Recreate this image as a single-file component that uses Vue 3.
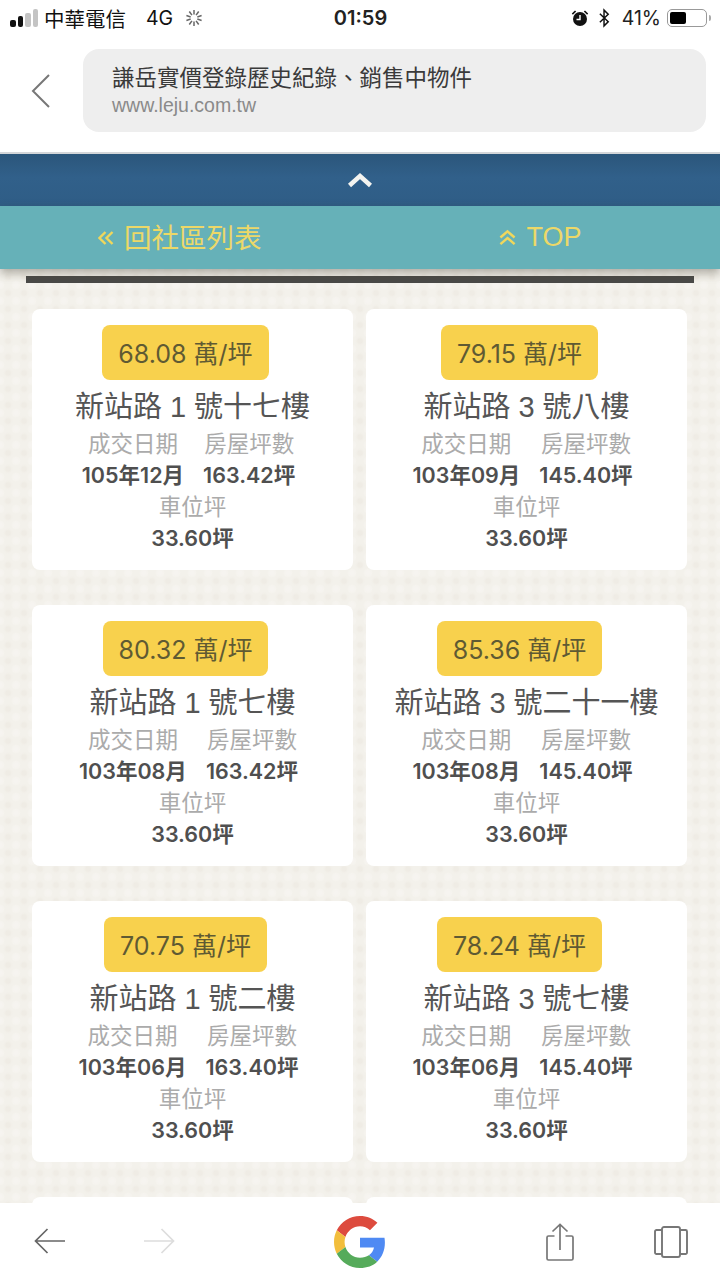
<script setup>
const deals = [
  { price: '68.08', name: '新站路 1 號十七樓', date: '105年12月', size: '163.42坪' },
  { price: '79.15', name: '新站路 3 號八樓', date: '103年09月', size: '145.40坪' },
  { price: '80.32', name: '新站路 1 號七樓', date: '103年08月', size: '163.42坪' },
  { price: '85.36', name: '新站路 3 號二十一樓', date: '103年08月', size: '145.40坪' },
  { price: '70.75', name: '新站路 1 號二樓', date: '103年06月', size: '163.40坪' },
  { price: '78.24', name: '新站路 3 號七樓', date: '103年06月', size: '145.40坪' },
  { price: '78.24', name: '新站路 1 號五樓', date: '103年05月', size: '163.40坪' },
  { price: '78.24', name: '新站路 3 號五樓', date: '103年05月', size: '145.40坪' }
];

// 轉圈圈的線
const spokes = Array.from({ length: 10 }, (_, i) => i * 36);
</script>

<template>
  <div class="page">
    <div class="status-bar">
      <div class="status-left">
        <div class="signal">
          <i class="on b1"></i><i class="on b2"></i><i class="b3"></i><i class="b4"></i>
        </div>
        <span class="carrier">中華電信</span>
        <span class="network">4G</span>
        <svg class="spinner" viewBox="0 0 18 18" width="18" height="18">
          <line
            v-for="deg in spokes"
            :key="deg"
            x1="9" y1="1" x2="9" y2="5.500"
            stroke="#666" stroke-width="1.500"
            :transform="`rotate(${deg} 9 9)`"
          />
        </svg>
      </div>
      <div class="status-time">01:59</div>
      <div class="status-right">
        <svg class="alarm" viewBox="0 0 18 18" width="18" height="18">
          <circle cx="9" cy="10" r="7" fill="#111" />
          <path d="M9 6v4.500H5.500" fill="none" stroke="#fff" stroke-width="1.400" />
          <path d="M0.800 4.600 4 1.400 5.200 2.400 1.900 5.800zM17.200 4.600 14 1.400 12.800 2.400 16.100 5.800z" fill="#111" />
        </svg>
        <svg class="bluetooth" viewBox="0 0 14 20" width="13" height="20">
          <path d="M2 5.500 11 14 6.500 18.500V1.500L11 6 2 14.500" fill="none" stroke="#111" stroke-width="1.600" />
        </svg>
        <span class="percent">41%</span>
        <div class="battery"><div class="battery-fill"></div></div>
        <div class="battery-nub"></div>
      </div>
    </div>

    <div class="browser-head">
      <svg class="head-back" viewBox="0 0 20 36" width="20" height="36">
        <path d="M18 2 2 18l16 16" fill="none" stroke="#777" stroke-width="2" />
      </svg>
      <div class="address">
        <div class="address-title">謙岳實價登錄歷史紀錄、銷售中物件</div>
        <div class="address-url">www.leju.com.tw</div>
      </div>
    </div>

    <div class="collapse-bar">
      <svg viewBox="0 0 26 16" width="26" height="16">
        <path d="M2.500 13.500 13 4l10.500 9.500" fill="none" stroke="#f4f4f0" stroke-width="4.500" />
      </svg>
    </div>

    <div class="nav-bar">
      <div class="nav-item nav-back">
        <svg viewBox="0 0 16 14" width="16" height="14">
          <path d="M7.500 1 1.500 7l6 6M14.500 1l-6 6 6 6" fill="none" stroke="#f0d75c" stroke-width="2.400" />
        </svg>
        <span class="nav-back-text">回社區列表</span>
      </div>
      <div class="nav-item nav-top">
        <svg viewBox="0 0 18 18" width="17" height="18">
          <path d="M1.500 8.500 9 2l7.500 6.500M1.500 15.500 9 9l7.500 6.500" fill="none" stroke="#f0d75c" stroke-width="2.600" />
        </svg>
        <span>TOP</span>
      </div>
    </div>

    <div class="content">
      <div class="rule"></div>
      <div class="deal-grid">
        <div v-for="(deal, i) in deals" :key="i" class="deal-card">
          <div class="price-row">
            <div class="price">{{ deal.price }} 萬/坪</div>
          </div>
          <div class="deal-name">{{ deal.name }}</div>
          <div class="deal-cols">
            <div class="deal-col">
              <div class="label">成交日期</div>
              <div class="value">{{ deal.date }}</div>
            </div>
            <div class="deal-col">
              <div class="label">房屋坪數</div>
              <div class="value">{{ deal.size }}</div>
            </div>
          </div>
          <div class="label">車位坪</div>
          <div class="value">33.60坪</div>
        </div>
      </div>
    </div>

    <div class="toolbar">
      <svg class="tool-back" viewBox="0 0 31 26" width="31" height="26">
        <path d="M13.500 1 1.500 13l12 12M1.500 13H31" fill="none" stroke="#666" stroke-width="1.700" />
      </svg>
      <svg class="tool-forward" viewBox="0 0 31 26" width="31" height="26">
        <path d="M17.500 1l12 12-12 12M29.500 13H0" fill="none" stroke="#ddd" stroke-width="1.700" />
      </svg>
      <svg class="tool-google" viewBox="0 0 48 48" width="52" height="52">
        <path fill="#DD4B3E" d="M24 9.500c3.540 0 6.710 1.220 9.210 3.600l6.850-6.850C35.900 2.380 30.470 0 24 0 14.620 0 6.510 5.380 2.560 13.220l7.980 6.190C12.430 13.720 17.740 9.500 24 9.500z" />
        <path fill="#4F8AF3" d="M46.980 24.550c0-1.570-.15-3.090-.38-4.550H24v9.020h12.940c-.58 2.960-2.260 5.480-4.780 7.180l7.730 6c4.510-4.180 7.090-10.360 7.090-17.650z" />
        <path fill="#F2BE3C" d="M10.530 28.590c-.48-1.450-.76-2.990-.76-4.590s.27-3.140.76-4.590l-7.980-6.190C.92 16.460 0 20.120 0 24c0 3.880.92 7.540 2.560 10.780l7.970-6.190z" />
        <path fill="#56AB5B" d="M24 48c6.480 0 11.930-2.130 15.890-5.810l-7.730-6c-2.150 1.450-4.920 2.300-8.160 2.300-6.260 0-11.570-4.220-13.470-9.910l-7.980 6.190C6.510 42.620 14.620 48 24 48z" />
      </svg>
      <svg class="tool-share" viewBox="0 0 28 38" width="28" height="38">
        <path d="M8.500 13H2.500A1.500 1.500 0 0 0 1 14.500V35.500A1.500 1.500 0 0 0 2.500 37H25.500A1.500 1.500 0 0 0 27 35.500V14.500A1.500 1.500 0 0 0 25.500 13H19.500" fill="none" stroke="#777" stroke-width="1.700" />
        <path d="M14 27V1.500M6.500 8.500 14 1.500l7.500 7" fill="none" stroke="#777" stroke-width="1.700" />
      </svg>
      <svg class="tool-tabs" viewBox="0 0 34 32" width="34" height="32">
        <rect x="8" y="1" width="18" height="30" rx="2" fill="none" stroke="#777" stroke-width="1.900" />
        <path d="M8 4H2.500A1.500 1.500 0 0 0 1 5.500V26.500A1.500 1.500 0 0 0 2.500 28H8M26 4H31.500A1.500 1.500 0 0 1 33 5.500V26.500A1.500 1.500 0 0 1 31.500 28H26" fill="none" stroke="#777" stroke-width="1.900" />
      </svg>
    </div>
  </div>
</template>

<style>
html,
body {
  margin: 0;
  background: #fff;
}
</style>

<style scoped>
.page {
  width: 720px;
  height: 1280px;
  display: flex;
  flex-direction: column;
  overflow: hidden;
  background: #fff;
  font-family: "Liberation Sans", "Noto Sans CJK TC", sans-serif;
}

/* 狀態列 */
.status-bar {
  height: 40px;
  flex: none;
  display: grid;
  grid-template-columns: 1fr auto 1fr;
  align-items: center;
  color: #111;
  font-size: 20px;
  padding: 0 9px 4px 10px;
  box-sizing: border-box;
  font-family: Inter, "Noto Sans CJK TC", sans-serif;
}

.status-left,
.status-right {
  display: flex;
  align-items: center;
}

.status-right {
  justify-content: flex-end;
}

.signal {
  display: flex;
  align-items: flex-end;
  gap: 2px;
  height: 18px;
}

.signal i {
  display: block;
  width: 5.500px;
  background: #c4c4c4;
  border-radius: 2px;
}

.signal .on {
  background: #111;
}

.signal .b1 { height: 7px; }
.signal .b2 { height: 11px; }
.signal .b3 { height: 14px; }
.signal .b4 { height: 18px; }

.carrier {
  margin-left: 6px;
  font-size: 20.500px;
}

.network {
  margin-left: 20px;
  font-size: 19.500px;
}

.spinner {
  margin-left: 12px;
}

.status-time {
  font-weight: 600;
  font-size: 20px;
  color: #222;
}

.bluetooth {
  margin-left: 9px;
}

.percent {
  margin-left: 11px;
  color: #222;
  font-size: 19.500px;
}

.battery {
  width: 40px;
  height: 18px;
  margin-left: 6px;
  border: 1px solid #999;
  border-radius: 5px;
  padding: 2px;
  box-sizing: border-box;
}

.battery-fill {
  width: 16px;
  height: 100%;
  background: #000;
  border-radius: 2px;
}

.battery-nub {
  width: 2px;
  height: 6px;
  margin-left: 2px;
  background: #aaa;
  border-radius: 0 2px 2px 0;
}

/* 瀏覽器標題 */
.browser-head {
  flex: none;
  display: flex;
  align-items: center;
  height: 114px;
  padding: 9px 14px 20px 31px;
  box-sizing: border-box;
  border-bottom: 2px solid #d3d6d9;
}

.head-back {
  flex: none;
}

.address {
  flex: 1;
  height: 83px;
  margin-left: 32px;
  padding: 15px 0 0 29px;
  box-sizing: border-box;
  background: #eeeeee;
  border-radius: 16px;
}

.address-title {
  font-size: 22.500px;
  line-height: 30px;
  color: #3a3a3a;
}

.address-url {
  font-size: 19.500px;
  line-height: 22px;
  color: #8a8a8a;
}

/* 深藍收合列 */
.collapse-bar {
  flex: none;
  height: 52px;
  display: flex;
  align-items: center;
  justify-content: center;
  background: linear-gradient(#2b567b, #31608a 45%, #2f5d86);
}

/* 藍綠導覽 */
.nav-bar {
  flex: none;
  position: relative;
  z-index: 1;
  height: 63px;
  display: flex;
  align-items: center;
  background: #66b1b8;
  box-shadow: 0 4px 9px rgba(60, 55, 40, 0.4);
  color: #ecd868;
  font-size: 27.500px;
}

.nav-item {
  display: flex;
  align-items: center;
}

.nav-back {
  margin-left: 98px;
  gap: 10px;
}

.nav-back-text {
  margin-bottom: 3px;
}

.nav-top {
  margin-left: 237px;
  gap: 11px;
  font-size: 27px;
}

/* 列表區 */
.content {
  flex: 1;
  min-height: 0;
  overflow: hidden;
  padding: 7px 26px 0;
  background-color: #f3f1eb;
  background-image:
    radial-gradient(circle at 8px 8px, #efece5 2px, transparent 5px),
    radial-gradient(circle at 0 0, #f6f4f0 2px, transparent 5px),
    radial-gradient(circle at 16px 0, #f6f4f0 2px, transparent 5px),
    radial-gradient(circle at 0 16px, #f6f4f0 2px, transparent 5px),
    radial-gradient(circle at 16px 16px, #f6f4f0 2px, transparent 5px);
  background-size: 16px 16px;
}

.rule {
  height: 7px;
  background: #4a4a48;
}

.deal-grid {
  display: grid;
  grid-template-columns: 321px 321px;
  column-gap: 13px;
  row-gap: 35px;
  margin: 26px 7px 0 6px;
}

.deal-card {
  height: 261px;
  padding-top: 16px;
  box-sizing: border-box;
  background: #fff;
  border-radius: 8px;
  text-align: center;
}

.price-row {
  display: flex;
  justify-content: center;
  padding-right: 14px;
}

.price {
  height: 55px;
  padding: 0 16px;
  line-height: 58px;
  background: #f8d14d;
  border-radius: 8px;
  color: #5f5a33;
  font-family: Inter, "Noto Sans CJK TC", sans-serif;
  font-size: 25px;
  white-space: nowrap;
}

.deal-name {
  margin: 10px 0 4px;
  font-size: 29px;
  line-height: 34px;
  color: #555;
  white-space: nowrap;
}

.deal-cols {
  display: flex;
  justify-content: center;
  gap: 19px;
  padding-right: 8px;
}

.deal-col {
  text-align: center;
}

.label {
  height: 32px;
  font-size: 22.500px;
  line-height: 34px;
  color: #ababab;
  white-space: nowrap;
}

.value {
  font-family: Inter, "Noto Sans CJK TC", sans-serif;
  font-size: 21.500px;
  line-height: 31px;
  font-weight: 600;
  color: #4f4f4f;
  white-space: nowrap;
}

/* 底部工具列 */
.toolbar {
  flex: none;
  height: 77px;
  display: flex;
  align-items: center;
  padding: 0 0 0 34px;
  background: #fff;
}

.toolbar svg {
  flex: none;
}

.tool-back {
  margin-top: -1px;
}

.tool-forward {
  margin-left: 79px;
  margin-top: -1px;
}

.tool-google {
  margin-left: 159px;
  margin-top: 1px;
}

.tool-share {
  margin-left: 160px;
  margin-top: 1px;
}

.tool-tabs {
  margin-left: 80px;
  margin-top: 1px;
}
</style>
